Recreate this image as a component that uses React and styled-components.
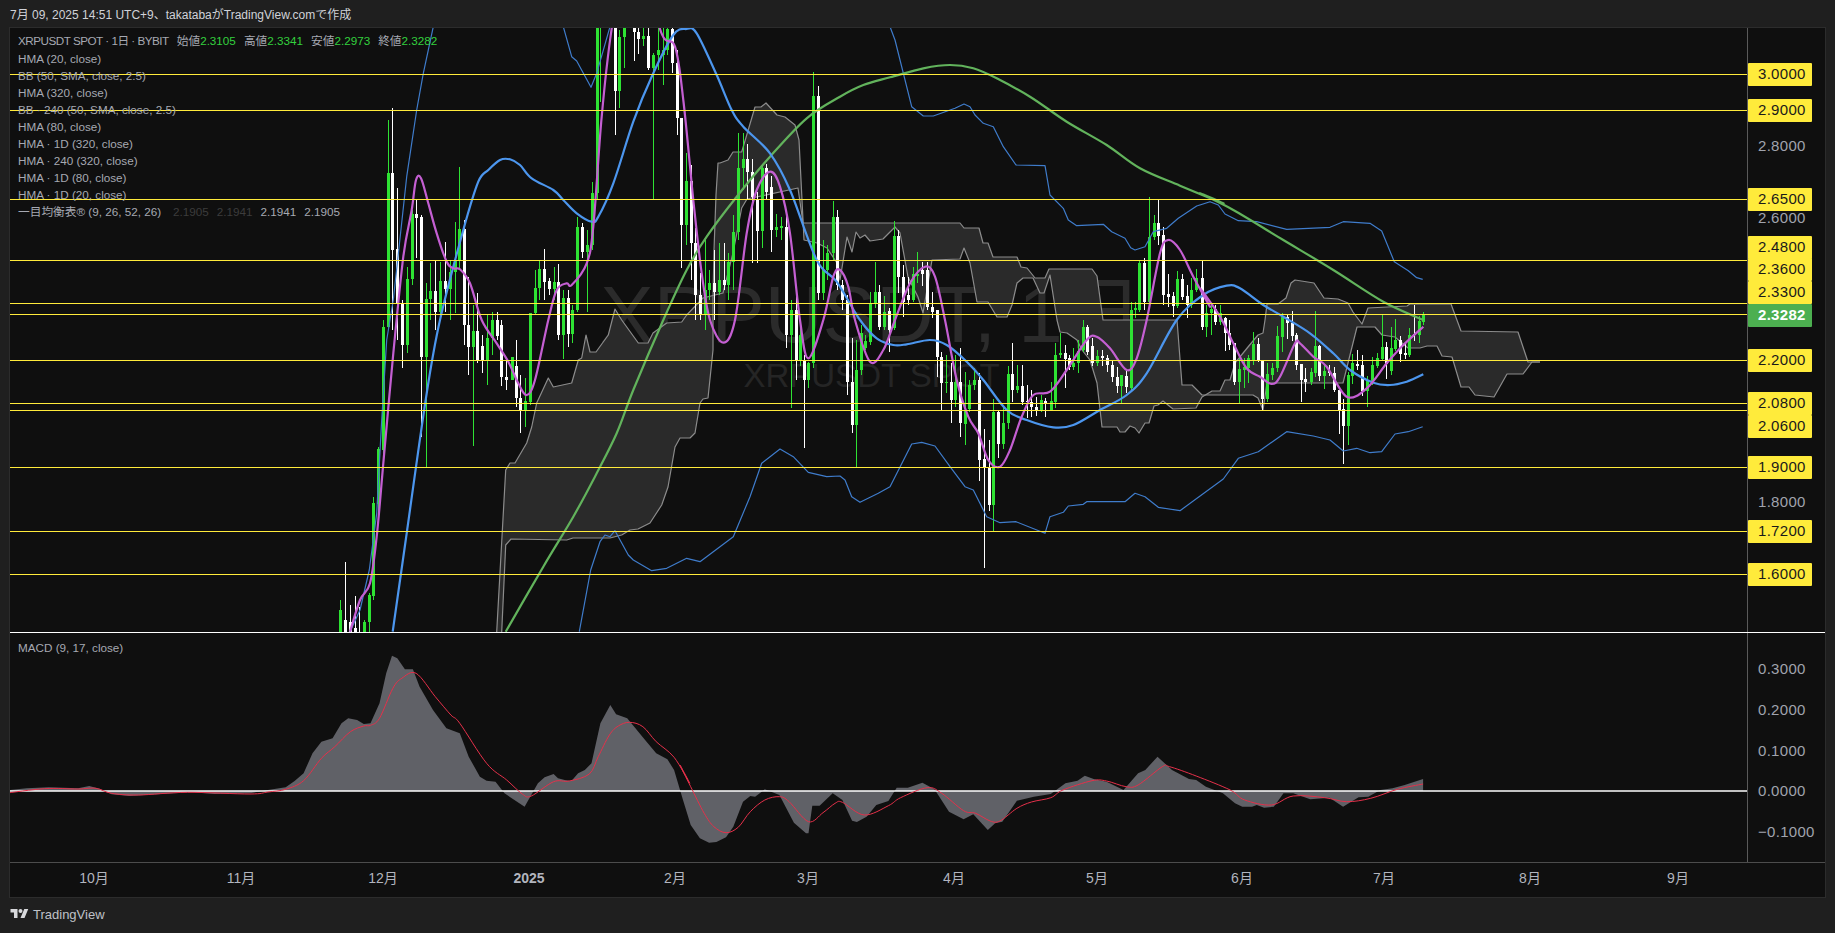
import React from "react";
import styled, { createGlobalStyle } from "styled-components";

const FONT = `"Liberation Sans", "Noto Sans CJK JP", sans-serif`;

const Global = createGlobalStyle`
  html, body { margin: 0; padding: 0; background: #1f1f1f; }
  body { font-family: ${FONT}; }
  #root { width: 1835px; height: 933px; overflow: hidden; }
`;

const Page = styled.div`
  width: 1835px; height: 933px; display: flex; flex-direction: column; background: #1f1f1f;
`;
const TopBar = styled.header`
  height: 27px; flex: none; display: flex; align-items: center; padding: 0 0 0 10px; box-sizing: border-box;
  font-size: 12px; color: #d0d2d8; letter-spacing: 0;
`;
const Frame = styled.main`
  margin: 0 9px; flex: none; width: 1817px; box-sizing: border-box; border: 1px solid #2c2c2c; background: #0f0f0f;
  display: flex; flex-direction: column;
`;
const Row = styled.section`
  display: flex; flex: none; height: ${p => p.$h}px; box-sizing: border-box;
  border-bottom: 1px solid ${p => p.$line};
`;
const Plot = styled.div`
  position: relative; flex: none; width: 1737px; overflow: hidden;
`;
const Axis = styled.div`
  position: relative; flex: none; width: 78px; box-sizing: border-box; border-left: 1px solid #5a5a5a;
`;
const ChartSvg = styled.svg`
  display: block; position: relative; z-index: 1; width: 1737px; height: 100%;
`;
const Watermark = styled.div`
  position: absolute; left: 0; right: 0; top: ${p => p.$top}px; text-align: center; white-space: nowrap;
  font-size: ${p => p.$size}px; line-height: 1; color: ${p => p.$color}; padding-right: ${p => p.$pr}px;
  z-index: 0;
`;
const Legend = styled.div`
  position: absolute; left: 8px; top: ${p => p.$top}px; z-index: 2; display: flex; flex-direction: column;
  font-size: 11.7px; color: #a6a9b2;
`;
const LegendRow = styled.div`
  height: 17px; line-height: 17px; display: flex; gap: 8px; white-space: nowrap;
`;
const HeaderRow = styled(LegendRow)`
  margin: -1px 0 1px;
`;
const SymbolName = styled.span`
  letter-spacing: -.5px;
`;
const IchimokuName = styled.span`
  margin-right: 4px;
`;
const Val = styled.span`
  color: ${p => p.$c || "#33d13e"};
`;
const Tick = styled.div`
  position: absolute; left: 0; width: 64px; height: 23px; line-height: 21px; padding-left: 10px; box-sizing: border-box;
  font-size: 15px; letter-spacing: .3px; color: ${p => p.$fg}; background: ${p => p.$bg};
  border-radius: 1px; white-space: nowrap; font-weight: ${p => p.$bold ? 700 : 400};
`;
const TimeRow = styled.div`
  position: relative; height: 34px; flex: none;
`;
const TimeLabel = styled.span`
  position: absolute; top: 7px; transform: translateX(-50%); font-size: 14px; line-height: 17px;
  color: #b2b5be; font-weight: ${p => p.$bold ? 700 : 400}; white-space: nowrap;
`;
const Footer = styled.footer`
  height: 35px; flex: none; display: flex; align-items: center; gap: 4px; padding: 0 0 3px 10px; box-sizing: border-box;
  color: #bfc1c7; font-size: 13px;
`;
const Logo = styled.svg`
  width: 19px; height: 14px; display: block;
`;

// zoom-crop coordinates → page coordinates
const seg = (ox, oy, sx, sy, s) =>
  s.trim().split(/\s+/).map(t => { const [a, b] = t.split(",").map(Number); return [ox + a / sx, oy + b / sy]; });
const z5 = s => seg(340, 0, 3, 3, s);
const z6 = s => seg(340, 320, 3, 3, s);
const z7 = s => seg(840, 0, 3, 3, s);
const z8 = s => seg(840, 320, 3, 3, s);
const z9 = s => seg(1200, 180, 3, 3, s);
const m4 = s => seg(0, 620, 2.24, 3, s);
const m10 = s => seg(680, 630, 2.063, 3, s);

const poly = pts => pts.map(p => p[0].toFixed(1) + "," + p[1].toFixed(1)).join(" ");
const smooth = pts => {
  let d = `M${pts[0][0].toFixed(1)} ${pts[0][1].toFixed(1)}`;
  for (let i = 0; i < pts.length - 1; i++) {
    const p0 = pts[i - 1] || pts[i], p1 = pts[i], p2 = pts[i + 1], p3 = pts[i + 2] || p2;
    const c1 = [p1[0] + (p2[0] - p0[0]) / 6, p1[1] + (p2[1] - p0[1]) / 6];
    const c2 = [p2[0] - (p3[0] - p1[0]) / 6, p2[1] - (p3[1] - p1[1]) / 6];
    d += `C${c1[0].toFixed(1)} ${c1[1].toFixed(1)} ${c2[0].toFixed(1)} ${c2[1].toFixed(1)} ${p2[0].toFixed(1)} ${p2[1].toFixed(1)}`;
  }
  return d;
};

const CANDLES = `340 g 610 640 600 640|345 w 620 640 562 640|350 w 622 640 605 640|355 w 628 640 596 640|359 w 632 640 607 640|364 g 622 640 620 640|369 g 595 622 593 632|373 g 503 596 497 600|378 g 449 504 447 516|383 g 327 450 320 455|388 g 173 327 120 330|392 w 173 250 108 330|397 w 249 303 188 340|402 w 303 345 300 368|407 g 279 345 267 353|412 g 214 279 210 285|416 w 214 218 200 258|421 w 217 357 215 437|426 g 299 357 283 467|430 g 291 299 263 320|435 w 291 312 260 330|440 g 281 312 262 320|445 w 281 289 242 312|450 g 272 289 260 320|455 g 260 272 222 313|459 g 229 260 167 270|464 w 229 325 220 345|468 w 325 347 277 375|473 g 331 347 305 446|477 w 331 360 293 363|482 w 346 360 335 373|487 g 338 360 315 385|492 g 320 338 312 355|497 w 320 336 312 340|501 w 325 377 320 386|506 w 377 380 360 390|512 g 357 380 357 380|516 w 366 398 340 407|520 w 398 410 375 433|525 g 401 410 378 427|530 g 313 402 313 405|535 g 288 313 270 315|539 g 269 288 260 300|544 w 269 282 249 300|549 w 281 289 278 295|554 g 282 289 267 300|558 w 282 335 264 340|563 g 298 335 290 359|568 w 298 334 290 347|572 g 310 334 305 343|577 g 227 310 217 312|582 w 227 252 223 258|587 g 245 252 230 312|592 g 193 245 182 250|597 g 0 193 0 200|600 g 0 20 0 102|615 w 0 91 0 135|619 g 37 91 30 108|624 g 20 37 20 68|634 w 20 32 20 61|638 w 32 39 25 54|643 g 36 39 27 46|648 w 36 68 27 70|653 g 55 68 53 199|658 g 50 55 27 70|663 g 50 55 27 85|667 g 29 50 27 55|672 w 29 63 27 73|677 w 63 118 50 135|681 w 118 225 118 268|686 g 181 225 153 245|691 w 181 243 165 280|695 w 243 295 228 320|700 w 295 315 273 320|705 g 290 315 238 330|709 g 283 290 270 300|714 w 283 292 250 320|719 g 280 292 243 295|724 w 280 285 243 290|728 g 262 285 253 300|733 g 232 262 215 290|738 g 168 232 133 240|743 g 159 168 133 190|747 w 159 172 144 200|752 w 172 197 159 263|757 w 200 231 192 263|762 g 168 231 165 248|766 w 168 192 164 200|771 w 187 230 176 252|776 g 227 230 214 237|781 g 226 228 217 240|786 w 227 335 213 348|791 g 310 335 300 408|796 w 310 360 295 380|800 g 335 360 325 366|804 w 360 380 355 448|808 g 363 380 362 388|813 g 96 363 72 368|818 w 96 293 86 300|823 g 270 293 240 300|827 g 253 270 245 280|833 g 217 253 201 260|837 w 217 285 210 290|842 w 285 300 280 310|847 w 300 382 295 395|852 w 382 425 338 433|856 g 370 425 340 467|861 g 333 370 325 375|865 g 341 348 335 350|870 g 304 342 292 345|875 g 292 304 262 308|879 w 292 327 285 330|884 g 312 327 296 330|889 w 311 330 308 352|894 g 236 328 221 330|898 w 236 277 230 293|903 w 277 302 265 317|908 w 295 300 277 305|913 g 274 300 267 302|917 g 274 276 252 283|922 w 270 274 262 286|927 w 270 307 262 310|932 w 307 312 292 318|937 w 310 357 310 377|941 w 357 383 352 410|946 g 382 383 355 393|951 w 382 400 363 423|955 g 382 400 355 407|960 w 382 423 348 437|965 g 410 424 372 445|969 g 385 409 380 412|974 g 380 385 368 390|979 w 380 460 373 481|984 w 459 468 429 568|989 w 468 505 440 511|993 g 412 505 399 531|998 w 412 444 410 458|1003 g 423 444 408 449|1008 g 374 423 366 429|1012 w 374 390 343 402|1017 g 386 390 365 393|1022 w 386 402 365 405|1027 w 401 402 385 418|1031 w 402 407 390 417|1036 w 407 410 397 416|1041 g 400 410 395 412|1045 w 401 403 398 417|1051 g 401 410 382 410|1055 g 355 402 343 408|1060 g 353 355 333 358|1065 w 353 359 345 388|1069 w 358 367 355 370|1073 g 363 367 348 370|1078 g 351 363 340 373|1083 g 327 350 320 352|1087 w 327 352 325 355|1092 w 346 363 338 366|1097 g 356 363 350 366|1102 w 356 358 350 366|1107 w 358 365 355 372|1112 w 365 377 360 382|1117 w 377 386 367 393|1121 g 375 386 375 403|1126 w 376 387 370 393|1131 g 310 388 302 390|1135 g 308 310 302 318|1139 g 263 310 260 312|1144 w 263 302 258 310|1149 g 237 302 197 305|1154 g 223 237 215 240|1158 w 223 236 200 245|1163 w 235 295 227 305|1168 w 294 297 274 307|1173 w 296 306 292 317|1177 g 279 306 271 308|1182 w 279 297 274 300|1187 w 296 305 285 318|1191 g 290 305 278 308|1196 g 278 290 269 292|1202 w 278 327 261 330|1206 g 313 327 305 337|1211 g 309 313 305 335|1215 w 309 322 305 325|1220 g 313 322 305 325|1225 w 318 333 317 351|1229 w 333 345 320 350|1234 w 343 382 343 385|1239 g 369 382 358 403|1244 g 367 370 358 388|1248 g 358 368 355 383|1253 g 344 360 332 365|1258 w 344 360 338 362|1262 w 361 399 361 410|1267 g 374 399 363 402|1272 g 368 375 363 380|1277 g 336 368 326 372|1282 g 317 337 313 352|1287 w 317 323 314 339|1292 w 323 336 311 341|1296 w 335 365 333 370|1301 w 364 380 364 402|1305 w 379 382 368 392|1311 g 372 382 368 385|1315 g 346 373 311 377|1319 w 346 376 345 381|1324 g 371 376 365 389|1329 w 371 373 365 376|1334 w 373 390 367 392|1339 w 390 410 390 434|1343 w 409 426 399 464|1348 g 375 426 372 445|1352 g 363 376 354 384|1357 w 364 366 350 370|1362 w 365 391 355 396|1367 g 381 391 376 407|1372 g 365 382 357 385|1377 g 358 366 353 368|1382 g 347 359 315 360|1386 w 347 364 342 379|1391 g 348 371 327 375|1395 g 340 349 319 351|1400 w 340 354 336 362|1405 w 353 355 342 359|1409 g 335 355 328 357|1414 w 334 335 305 341|1419 g 321 335 316 343|1423 g 315 322 312 325`
  .split("|").map(r => { const a = r.split(" "); return { x: +a[0], c: a[1], t: +a[2], b: +a[3], h: +a[4], l: +a[5] }; });

const HMA_BLUE = [
  ...z6("158,935 200,640 260,220 300,0"),
  ...z5("370,690 415,545 445,510 480,480 510,478 540,495 575,535 640,570 670,600 710,640 755,665 775,650 820,550 880,365 935,230 1000,105 1040,87 1070,100 1130,225 1175,330 1210,380 1290,460 1350,570 1430,780 1490,845"),
  ...z8("60,0 110,55 160,75 200,73 270,60 320,75 380,125 430,180 500,270 560,300 640,322 700,315 780,270 860,225 920,160 1010,0"),
  ...z7("1090,885 1160,857 1200,865 1270,915"),
  ...z9("250,410 330,460 400,520 450,570 520,608 570,615 620,605 670,583"),
];
const HMA_PINK = [
  ...z6("30,935 60,840 90,790 110,650 130,430 160,100"),
  ...z5("190,770 215,630 228,540 243,535 265,610 290,700 320,785 340,805 360,808 390,850 425,960"),
  ...z6("470,70 505,125 535,190 560,225 585,180 625,0"),
  ...z5("650,870 680,850 695,855 740,790 760,680 785,350 815,85 880,-300 958,80 1005,140 1030,300 1060,600 1085,820 1110,960"),
  ...z6("1150,68 1185,0"),
  ...z5("1220,700 1250,570 1290,515 1320,560 1350,700 1380,960"),
  ...z6("1405,115 1450,0"),
  ...z5("1480,830 1500,810"),
  ...z7("25,860 45,960"),
  ...z8("90,125 130,90 165,0"),
  ...z7("210,850 255,800 285,830 315,960"),
  ...z8("350,180 385,290 415,340 445,420 480,440 510,390 545,290 580,225 630,215 680,150 740,60 770,50 810,85 860,150 890,115 920,0"),
  ...z7("960,760 985,720 1020,750 1060,830 1110,920"),
  ...z9("0,325 60,410 100,490 140,565 180,590 215,612 240,590 285,490 300,490 340,530 380,560 440,650 500,625 560,550 610,495 670,440"),
];
const HMA_GREEN = [
  ...z6("497,935 610,740 700,590 770,460 830,340 880,210 970,0"),
  ...z5("1040,810 1100,710 1190,590 1290,470 1400,355"),
  ...z7("0,290 70,255 150,232 250,205 330,195 400,205 470,235 570,290 680,365 800,435 900,505 1020,557 1150,610"),
  ...z9("0,40 100,90 250,180 400,270 550,365 670,420"),
];
const BB_PATHS = [
  [...z6("30,935 60,870 88,750 110,580 125,300 140,60 150,0"), ...z5("160,900 200,530 230,330 250,220 280,80")],
  z5("670,80 695,170 710,183 753,262 770,220 810,80"),
  [...z7("150,80 165,120 215,320 250,348 280,348 345,325 372,312 390,320 405,345 430,370 460,380 490,440 528,495 615,497 630,585 670,625 685,660 710,677 790,673 815,695 855,715 872,743 885,750 915,740 940,695 980,685 1015,655 1070,618 1110,605"),
   ...z9("0,75 30,65 55,75 75,102 115,122 170,125 260,148 390,142 430,125 510,130 545,153 583,245 625,272 650,293 668,298")],
  [...z6("718,935 752,750 780,665 795,645 810,650 825,632 865,705 880,720 935,752 980,745 1040,715 1080,725 1120,695 1180,650 1230,530 1265,430 1320,387 1360,410 1405,457 1460,470 1500,468"),
   ...z8("15,480 35,530 60,547 115,520 150,500 215,372 245,367 285,378 330,440 375,500 400,510 440,590 480,608 528,605 615,640 630,590 670,577 685,558 730,553 740,545 855,545 885,520 915,530 955,562 1020,572"),
   ...z9("0,790 30,780 70,897 115,835 175,815 260,755 340,768 390,780 430,813 470,805 510,818 545,815 585,762 625,755 668,740").slice(2)],
];
const SPAN_X = [[496.7,632],[505.7,470],[510,463],[515,463],[526.7,443],[531.7,427],[536.7,403],[548.3,378],[553.3,387],[571.7,383],[578.3,360],[581.7,358],[586,335],[590,352],[596,352],[608.3,335],[615,309],[621.7,320],[638.3,343],[648,343],[653,333],[666.7,323],[681.7,322],[686.7,315],[703,298],[723,293],[733,253],[741.7,208],[747,199],[798,188],[803,223],[960,223],[964,228],[979,228],[983,243],[988,243],[993,257],[1017,257],[1021,267],[1027,268],[1035,278],[1045,278],[1049,269],[1092,269],[1097,276],[1103,320],[1177,320],[1182,385],[1192,385],[1202,395],[1253,395],[1258,398],[1263,410],[1267,383],[1343,383],[1357,327],[1375,327],[1382,335],[1395,337],[1408,348],[1420,348],[1427,346],[1437,346],[1442,356],[1452,357],[1461,387],[1469,387],[1475,395],[1494,397],[1507,374],[1523,374],[1532,362],[1540,362]];
const SPAN_Y = [[501.7,632],[505.7,545],[511,539],[566.7,540],[573,538],[610,538],[621.7,535],[630,530],[638,529],[650,523],[661.7,505],[668,487],[675,447],[680,438],[690,438],[695,433],[700,403],[703,399],[708,398],[713,350],[713,300],[714,250],[716,195],[718,163],[720,163],[728,160],[733,152],[741.7,152],[755,107],[761,107],[766,103],[777,115],[785,117],[795,125],[799,140],[804,240],[817,243],[827,248],[837,263],[840,280],[847,237],[852,252],[856,232],[860,238],[865,235],[870,241],[883,239],[895,227],[900,233],[908,277],[918,297],[923,313],[932,260],[960,259],[964,248],[970,263],[977,302],[988,302],[997,317],[1007,317],[1012,305],[1017,283],[1023,278],[1033,278],[1040,293],[1044,293],[1050,275],[1057,320],[1060,332],[1067,333],[1077,340],[1082,350],[1090,360],[1097,383],[1102,427],[1117,427],[1120,432],[1125,432],[1130,426],[1135,428],[1139,433],[1145,423],[1149,423],[1154,406],[1158,405],[1163,401],[1173,409],[1196,408],[1202,397],[1212,391],[1220,391],[1225,380],[1230,380],[1235,363],[1248,347],[1258,335],[1263,333],[1265,320],[1267,304],[1278,304],[1286,298],[1291,283],[1295,280],[1314,283],[1324,298],[1338,299],[1348,303],[1353,312],[1362,324],[1368,308],[1407,306],[1410,304],[1451,304],[1461,331],[1518,332],[1528,362],[1540,362]];
const LEVELS = [74, 110, 199, 260, 303, 314, 360, 403, 410, 467, 531, 574];

const MACD = [
  ...m4("10,512 60,505 110,502 175,505 200,498 225,507 250,523 290,528 360,522 430,517 480,522 560,520 600,510 640,502 660,483 680,460 700,400 720,365 745,355 765,310 780,295 800,300 815,312 830,310 850,250 865,160 878,107 890,115 907,148 925,148 940,200 970,270 1000,325 1030,340 1050,410 1075,470 1090,482 1110,485 1130,520 1175,560 1205,490 1220,472 1240,462 1250,475 1265,480 1280,483 1295,460 1310,450 1325,430 1345,310 1367,255 1380,283 1405,295 1445,360 1470,400 1495,418 1510,450 1530,540"),
  ...m10("22,585 41,625 60,638 75,636 95,622 110,590 130,515 145,498 155,500 175,478 205,495 235,578 260,610 265,610 273,527 288,527 315,490 335,510 355,572 365,576 385,560 405,525 430,513 447,473 470,473 500,458 525,478 555,545 585,568 605,553 635,600 650,580 665,575 695,512 730,500 765,492 795,460 820,452 835,437 855,448 880,455 915,480 945,430 960,420 985,380 1015,420 1050,447 1065,450 1085,470 1120,490 1145,520 1160,530 1180,530 1190,525 1205,533 1225,530 1245,490 1265,490 1300,508 1340,503 1368,530 1400,502 1420,500 1445,480 1470,475 1495,465 1533,447"),
];
const SIGNAL = [
  ...m4("10,520 100,506 175,507 215,505 250,520 310,525 420,517 560,522 600,516 640,508 680,482 720,415 750,380 785,335 815,318 830,316 850,295 880,205 900,175 932,160 975,230 1010,285 1030,310 1090,430 1135,480 1170,522 1190,528 1240,485 1275,483 1320,462 1340,410 1365,345 1385,318 1410,307 1440,320 1470,365 1510,412 1545,490"),
  ...m10("0,405 22,470 50,550 70,590 95,608 120,592 145,545 175,510 205,500 225,515 265,575 295,548 320,520 335,517 380,555 430,527 455,503 510,473 540,490 585,542 610,550 640,573 660,573 695,535 725,516 765,503 790,480 850,452 880,453 920,470 945,465 995,410 1010,410 1065,438 1135,480 1165,510 1220,525 1265,498 1330,503 1375,515 1425,505 1480,478 1533,462"),
];
const ZERO = 791;
const macdEnd = MACD[MACD.length - 1][0];
const macdArea = poly([[10, ZERO], ...MACD, [macdEnd, ZERO]]);

const PRICE_TICKS = [
  { y: 74, t: "3.0000", k: "y" }, { y: 110, t: "2.9000", k: "y" }, { y: 146, t: "2.8000" },
  { y: 199, t: "2.6500", k: "y" }, { y: 218, t: "2.6000" }, { y: 247, t: "2.4800", k: "y" },
  { y: 269.5, t: "2.3600", k: "y" }, { y: 292.5, t: "2.3300", k: "y" }, { y: 315, t: "2.3282", k: "g" },
  { y: 360, t: "2.2000", k: "y" }, { y: 403.5, t: "2.0800", k: "y" }, { y: 426, t: "2.0600", k: "y" },
  { y: 467, t: "1.9000", k: "y" }, { y: 502, t: "1.8000" }, { y: 531, t: "1.7200", k: "y" }, { y: 574, t: "1.6000", k: "y" },
];
const MACD_TICKS = [{ y: 669, t: "0.3000" }, { y: 710, t: "0.2000" }, { y: 751, t: "0.1000" }, { y: 791, t: "0.0000" }, { y: 832, t: "−0.1000" }];
const MONTHS = [[94, "10月"], [241, "11月"], [383, "12月"], [529, "2025", true], [675, "2月"], [808, "3月"], [954, "4月"], [1097, "5月"], [1242, "6月"], [1384, "7月"], [1530, "8月"], [1678, "9月"]];
const STUDIES = ["HMA (20, close)", "BB (50, SMA, close, 2.5)", "HMA (320, close)", "BB · 240 (50, SMA, close, 2.5)", "HMA (80, close)", "HMA · 1D (320, close)", "HMA · 240 (320, close)", "HMA · 1D (80, close)", "HMA · 1D (20, close)"];
const GREEN = "#2ee233";

const tickStyle = { y: "#ffeb3b", g: "#4caf50" };
const Ticks = ({ items, origin }) => items.map(it => (
  <Tick key={it.t} style={{ top: it.y - origin - 11.5 }}
    $bg={it.k ? tickStyle[it.k] : "transparent"}
    $fg={it.k === "y" ? "#1a1a1a" : it.k === "g" ? "#fff" : "#a0a3ad"}
    $bold={it.k === "g"}>{it.t}</Tick>
));

export default function App() {
  return (
    <Page>
      <Global />
      <TopBar>7月 09, 2025 14:51 UTC+9、takatabaがTradingView.comで作成</TopBar>
      <Frame>
        <Row $h={605} $line="#ffffff">
          <Plot>
            <Watermark $top={247} $size={80} $color="#2b2b2b" $pr={14}>XRPUSDT, 1日</Watermark>
            <Watermark $top={331} $size={33} $color="#252525" $pr={14}>XRPUSDT SPOT</Watermark>
            <Legend $top={5}>
              <HeaderRow>
                <SymbolName>XRPUSDT SPOT · 1日 · BYBIT</SymbolName>
                <span>始値<Val>2.3105</Val></span>
                <span>高値<Val>2.3341</Val></span>
                <span>安値<Val>2.2973</Val></span>
                <span>終値<Val>2.3282</Val></span>
              </HeaderRow>
              {STUDIES.map(s => <LegendRow key={s}>{s}</LegendRow>)}
              <LegendRow>
                <IchimokuName>一目均衡表® (9, 26, 52, 26)</IchimokuName>
                <Val $c="#3c3c3c">2.1905</Val>
                <Val $c="#3c3c3c">2.1941</Val>
                <Val $c="#a6a9b2">2.1941</Val>
                <Val $c="#a6a9b2">2.1905</Val>
              </LegendRow>
            </Legend>
            <ChartSvg viewBox="10 28 1737 604" preserveAspectRatio="none">
              <polygon points={poly([...SPAN_X, ...[...SPAN_Y].reverse()])} fill="#2a2a2a" fillRule="nonzero" />
              <polyline points={poly(SPAN_X)} fill="none" stroke="#8c8c8c" strokeWidth="1.2" strokeLinejoin="round" />
              <polyline points={poly(SPAN_Y)} fill="none" stroke="#8c8c8c" strokeWidth="1.2" strokeLinejoin="round" />
              <g shapeRendering="crispEdges">
                {CANDLES.map(c => (
                  <g key={c.x} fill={c.c === "g" ? GREEN : "#ffffff"}>
                    <rect x={c.x - 0.5} y={c.h} width="1" height={Math.max(c.l - c.h, 1)} />
                    <rect x={c.x - 1.5} y={c.t} width="3" height={Math.max(c.b - c.t, 1)} />
                  </g>
                ))}
              </g>
              {BB_PATHS.map((p, i) => (
                <polyline key={i} points={poly(p)} fill="none" stroke="#3f7ccb" strokeWidth="1.2" strokeLinejoin="round" />
              ))}
              <path d={smooth(HMA_GREEN)} fill="none" stroke="#62b35c" strokeWidth="2.2" />
              <path d={smooth(HMA_BLUE)} fill="none" stroke="#4c96ee" strokeWidth="2.2" />
              <path d={smooth(HMA_PINK)} fill="none" stroke="#c45fd2" strokeWidth="2.2" />
              <g stroke="#ffeb3b" strokeWidth="1" shapeRendering="crispEdges">
                {LEVELS.map(y => <line key={y} x1="10" x2="1747" y1={y + 0.5} y2={y + 0.5} />)}
              </g>
            </ChartSvg>
          </Plot>
          <Axis><Ticks items={PRICE_TICKS} origin={28} /></Axis>
        </Row>
        <Row $h={230} $line="#4c4c4c">
          <Plot>
            <Legend $top={6}>
              <LegendRow>MACD (9, 17, close)</LegendRow>
            </Legend>
            <ChartSvg viewBox="10 633 1737 229" preserveAspectRatio="none">
              <polygon points={macdArea} fill="#606167" />
              <line x1="10" x2="1747" y1={ZERO} y2={ZERO} stroke="#ffffff" strokeWidth="1.4" />
              <path d={smooth(SIGNAL)} fill="none" stroke="#e5304a" strokeWidth="1" />
            </ChartSvg>
          </Plot>
          <Axis><Ticks items={MACD_TICKS} origin={633} /></Axis>
        </Row>
        <TimeRow>
          {MONTHS.map(([x, t, b]) => <TimeLabel key={t} $bold={b} style={{ left: x - 10 }}>{t}</TimeLabel>)}
        </TimeRow>
      </Frame>
      <Footer>
        <Logo viewBox="0 0 36 28" aria-hidden="true">
          <path fill="#d8d9dc" d="M14 22H7V11H0V4h14v18zM28 22h-8l7.5-18h8L28 22z" />
          <circle fill="#d8d9dc" cx="20" cy="8" r="4" />
        </Logo>
        <span>TradingView</span>
      </Footer>
    </Page>
  );
}
